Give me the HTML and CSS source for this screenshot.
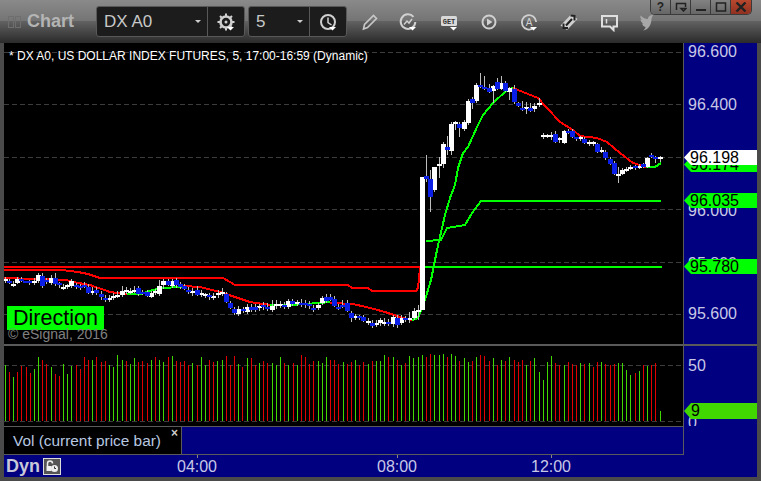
FILE: index.html
```html
<!DOCTYPE html>
<html lang="en">
<head>
<meta charset="utf-8">
<title>Chart</title>
<link rel="stylesheet" href="styles.css">
</head>
<body>
<div class="window">
  <header class="titlebar">
    <div class="links"><span class="link"></span><span class="link"></span></div>
    <div class="title">Chart</div>
    <div class="combo combo-symbol">
      <div class="combo-value">DX A0<span class="caret"></span></div>
      <button class="combo-btn">
        <svg class="ico" viewBox="0 0 20 20"><circle cx="10" cy="10" r="5.500" fill="none" stroke="#d0d0d0" stroke-width="2.600"/><circle cx="10" cy="10" r="1.500" fill="#d0d0d0"/><path d="M10 1.500V4M10 16V18.500M1.500 10H4M16 10H18.500M4 4L5.800 5.800M14.200 14.200L16 16M16 4L14.200 5.800M4 16L5.800 14.200" stroke="#d0d0d0" stroke-width="2"/><path d="M11 15H18L14.500 18.500Z" fill="#fff"/></svg>
      </button>
    </div>
    <div class="combo combo-interval">
      <div class="combo-value">5<span class="caret"></span></div>
      <button class="combo-btn">
        <svg class="ico" viewBox="0 0 20 20"><circle cx="10" cy="10" r="7" fill="none" stroke="#d0d0d0" stroke-width="2"/><path d="M10 5.500V10.500L13.500 13" fill="none" stroke="#d0d0d0" stroke-width="1.500"/><path d="M11 15H18L14.500 18.500Z" fill="#fff"/></svg>
      </button>
    </div>
    <div class="tools">
      <svg class="ico t-pencil" viewBox="0 0 20 20"><path d="M3.500 17L4.500 12.500L13.500 3.500L16.500 6.500L7.500 15.500Z" fill="none" stroke="#c8c8c8" stroke-width="1.600"/></svg>
      <svg class="ico t-study" viewBox="0 0 20 20"><path d="M15.500 4.800A7.300 7.300 0 1 0 17.300 10" fill="none" stroke="#d0d0d0" stroke-width="2"/><path d="M6 12.500L9 9L11 11L14 7" fill="none" stroke="#d0d0d0" stroke-width="1.500"/><path d="M11 15H18L14.500 18.500Z" fill="#fff"/></svg>
      <svg class="ico t-get" viewBox="0 0 20 20"><rect x="0" y="4" width="16" height="10" rx="1.500" fill="#d8d8d8"/><text class="get-text" x="8" y="12">GET</text><path d="M9 15H16L12.500 18.500Z" fill="#fff"/></svg>
      <svg class="ico t-play" viewBox="0 0 20 20"><circle cx="10" cy="10" r="6.500" fill="none" stroke="#d0d0d0" stroke-width="2"/><path d="M8 6.500L13.500 10L8 13.500Z" fill="#d0d0d0"/></svg>
      <svg class="ico t-alert" viewBox="0 0 20 20"><path d="M14.500 16A7.200 7.200 0 1 1 17.200 10" fill="none" stroke="#d0d0d0" stroke-width="1.800"/><text class="alert-text" x="10" y="14">A</text><path d="M11 15H18L14.500 18.500Z" fill="#fff"/></svg>
      <svg class="ico t-swap" viewBox="0 0 20 20"><path d="M1.500 13.500L12 2.500L18.500 7L8 18Z" fill="#d0d0d0"/><path d="M11.500 3.500L15.500 4L15.500 8.500M4.500 11.500L4.500 16L9 16M7 13.500L13 7" fill="none" stroke="#222" stroke-width="2"/></svg>
      <svg class="ico t-note" viewBox="0 0 20 20"><path d="M3 4H18V14.500H14.500V18L11 14.500H3Z" fill="none" stroke="#e0e0e0" stroke-width="2"/><path d="M7.500 7V11.500" stroke="#e0e0e0" stroke-width="1.500"/></svg>
      <svg class="ico t-bird" viewBox="0 0 20 20"><path d="M17 3L15.500 6.500C15.500 12.500 12.500 18 7 18.500C9 17 9.500 16 9.500 15C7.500 14.500 6.500 13 6 11.500L7.500 11.500C5.500 10.500 4.500 9 4.500 7.500L6 8C4.500 6.500 4 5 4.500 3.500C7 6 9.500 7 12 7C11.800 4.500 14.500 3 17 3Z" fill="#a8a8a8"/></svg>
    </div>
    <div class="winbtns">
      <button class="winbtn">?</button>
      <button class="winbtn"><svg class="winico" viewBox="0 0 12 10"><path d="M1.500 8V1.500H10.500V5M6 6.500H11L8.500 9Z" fill="none" stroke="#222" stroke-width="1.500"/></svg></button>
      <button class="winbtn"><svg class="winico" viewBox="0 0 12 10"><path d="M1 8H11" stroke="#222" stroke-width="2"/></svg></button>
      <button class="winbtn"><svg class="winico" viewBox="0 0 12 10"><rect x="1.500" y="1" width="9" height="8" fill="none" stroke="#222" stroke-width="1.500"/></svg></button>
      <button class="winbtn winbtn-close"><svg class="winico" viewBox="0 0 12 10"><path d="M1.500 0.500L10.500 9.500M10.500 0.500L1.500 9.500" stroke="#222" stroke-width="2.400"/></svg></button>
    </div>
  </header>

  <section class="row row-price">
    <div class="canvas">
      <svg class="plot" width="679" height="301" viewBox="4 43 679 301">
        <path class="grid" d="M4 52.500H683M4 104.500H683M4 157.500H683M4 209.500H683M4 262.500H683M4 314.500H683"/>
        <polyline class="l-red" points="4,267 420,267"/>
        <polyline class="l-green" points="420,267 662,267"/>
        <polyline class="l-red" points="4,270 62,270 70,271 78,272 88,274 100,278 223,278 230,282 235,285 348,285 352,288 368,288 372,291 416,291 418,288 419,279 420,267"/>
        <polyline class="l-red" points="4,278 33,279 66,280 73,282 90,285 110,292 127,294"/>
        <polyline class="l-green" points="127,294 140,294 160,288 183,287"/>
        <polyline class="l-red" points="183,286 200,287 220,292 235,297 250,302 270,305"/>
        <polyline class="l-green" points="270,305 290,305 320,303 330,302"/>
        <polyline class="l-red" points="330,303 353,304 370,308 385,312 400,317 412,320"/>
        <polyline class="l-green" points="412,320 418,318 425,300 431,280 437,250 445,215 450,198 455,185 458,168 463,153 468,147 478,125 483,115 493,103 507,90 513,88"/>
        <polyline class="l-red" points="513,88 528,94 538,98 547,108 560,122 573,130 580,136 597,138 607,142 620,153 633,163 646,167"/>
        <polyline class="l-green" points="646,167 655,167 661,163"/>
        <polyline class="l-green" points="426,241 441,240 447,228 465,225 472,213 481,201 661,201"/>
        <path class="wick" d="M5.500 277V283M9.500 279V284M13.500 281V287M17.500 277V284M21.500 277V282M29.500 280V285M34.500 278V285M38.500 273V283M42.500 273V288M46.500 278V284M51.500 275V285M55.500 273V286M59.500 282V288M63.500 284V290M67.500 284V289M71.500 279V288M76.500 283V289M80.500 284V290M84.500 282V288M88.500 284V294M92.500 287V295M96.500 287V295M101.500 291V300M105.500 295V302M109.500 295V302M113.500 293V300M117.500 291V298M122.500 286V297M126.500 287V294M130.500 288V294M134.500 286V293M138.500 286V296M142.500 290V295M147.500 290V297M151.500 291V298M155.500 289V295M159.500 280V296M163.500 279V289M168.500 279V286M172.500 279V288M176.500 278V288M180.500 282V289M184.500 284V290M188.500 287V294M192.500 288V296M197.500 286V296M201.500 290V297M205.500 293V298M209.500 293V300M213.500 293V300M218.500 290V298M222.500 288V296M226.500 292V303M230.500 301V309M234.500 307V315M238.500 306V316M243.500 307V313M247.500 304V314M251.500 304V312M255.500 304V312M259.500 304V311M263.500 302V310M267.500 303V311M272.500 300V312M276.500 300V309M280.500 301V308M284.500 302V309M288.500 299V309M292.500 299V306M297.500 300V306M301.500 299V307M305.500 300V308M309.500 301V309M313.500 305V312M318.500 303V310M322.500 296V305M326.500 294V303M330.500 294V301M334.500 296V307M338.500 304V310M342.500 300V308M347.500 300V312M351.500 311V322M355.500 314V320M359.500 315V320M363.500 315V322M368.500 318V325M372.500 320V328M376.500 320V327M380.500 318V326M384.500 318V326M388.500 319V326M393.500 315V327M397.500 315V328M401.500 315V325M405.500 316V322M409.500 312V323M414.500 308V320M418.500 305V320M426.500 155V182M430.500 170V212M434.500 167V192M439.500 157V178M443.500 142V168M447.500 136V155M451.500 122V155M455.500 121V130M459.500 122V137M464.500 120V131M468.500 99V125M472.500 97V109M476.500 83V103M480.500 73V88M484.500 76V90M489.500 84V93M493.500 85V103M497.500 78V90M501.500 76V90M505.500 81V92M509.500 87V100M514.500 85V104M518.500 102V107M522.500 101V111M526.500 102V114M530.500 103V112M534.500 103V112M539.500 98V107M543.500 133V139M547.500 134V138M551.500 132V140M555.500 131V143M559.500 137V143M564.500 130V144M568.500 129V134M572.500 129V138M576.500 137V141M580.500 136V141M584.500 137V144M589.500 140V146M593.500 141V146M597.500 143V153M601.500 147V153M605.500 150V160M610.500 157V165M614.500 161V175M618.500 167V183M622.500 168V175M626.500 167V172M630.500 165V170M635.500 165V170M639.500 164V169M643.500 163V168M647.500 157V168M651.500 153V158M655.500 156V163M660.500 156V162"/>
        <path class="body-white" d="M5 279V281M13 284V286M17 279V283M34 281V283M38 275V281M51 278V283M63 287V289M67 285V287M71 281V286M92 291V293M109 298V300M113 296V298M117 295V297M122 291V295M126 290V292M130 291V293M134 290V292M151 293V297M155 291V293M159 286V294M163 281V285M172 281V286M192 291V293M201 293V295M205 294V296M213 296V298M218 293V295M222 292V294M238 309V314M247 307V312M259 306V308M272 306V310M276 304V306M280 304V306M288 301V307M297 302V304M318 305V308M322 298V303M355 316V318M368 321V323M376 323V325M380 320V323M384 322V324M393 317V324M401 318V323M409 318V320M414 311V318M418 310V312M434 167V190M439 164V166M443 144V164M451 124V151M455 122V124M464 122V129M468 101V123M476 85V101M493 86V91M501 83V89M509 88V92M526 107V109M534 106V109M539 103V105M543 135V137M547 135V137M551 135V137M559 138V140M564 131V143M580 137V139M589 142V144M593 142V144M601 150V152M618 174V176M622 170V174M626 169V171M630 167V169M639 166V168M647 158V167M660 157V159"/>
        <path class="body-spike" d="M422.500 177V310"/>
        <path class="body-blue" d="M9 281V283M21 279V281M25 281V283M29 281V283M42 276V286M46 280V282M55 278V284M59 283V285M76 285V287M80 286V288M84 285V287M88 287V293M96 290V293M101 294V297M105 298V300M138 288V294M142 292V294M147 292V296M168 281V285M176 280V285M180 284V287M184 286V289M188 290V292M197 290V295M209 295V297M226 294V302M230 303V308M234 309V313M243 309V311M251 307V310M255 307V310M263 305V307M267 307V309M284 305V307M292 301V304M301 303V305M305 303V305M309 304V306M313 308V310M326 297V301M330 297V300M334 299V306M338 307V309M342 305V307M347 303V311M351 313V318M359 316V318M363 317V321M372 323V326M388 322V324M397 318V325M405 318V320M426 176V179M430 179V197M447 147V150M459 124V128M472 99V103M480 85V87M484 87V89M489 88V92M497 82V89M505 83V91M514 89V102M518 103V106M522 108V110M530 108V111M555 134V142M568 131V133M572 131V137M576 137V139M584 139V143M597 144V152M605 152V158M610 159V164M614 163V174M635 166V168M643 164V167M651 155V157M655 157V159"/>
      </svg>
      <div class="study-title">* DX A0, US DOLLAR INDEX FUTURES, 5, 17:00-16:59 (Dynamic)</div>
      <div class="study-tag">Direction</div>
      <div class="copyright">© eSignal, 2016</div>
    </div>
    <div class="axis">
      <span class="tick p1">96.600</span>
      <span class="tick p2">96.400</span>
      <span class="tick p3">96.000</span>
      <span class="tick p4">95.800</span>
      <span class="tick p5">95.600</span>
      <span class="flag flag-green f1">96.174</span>
      <span class="flag flag-white f2">96.198</span>
      <span class="flag flag-green f3">96.035</span>
      <span class="flag flag-green f4">95.780</span>
    </div>
  </section>

  <div class="divider"></div>

  <section class="row row-vol">
    <div class="canvas">
      <svg class="plot" width="679" height="80" viewBox="4 346 679 80">
        <path class="grid" d="M4 365.500H683M4 421.500H683"/>
        <path class="v-green" d="M5.500 365V421M13.500 377V421M34.500 369V421M38.500 357V421M51.500 367V421M63.500 364V421M67.500 374V421M71.500 366V421M92.500 360V421M109.500 365V421M113.500 367V421M117.500 355V421M122.500 360V421M130.500 364V421M134.500 358V421M151.500 360V421M159.500 360V421M163.500 362V421M172.500 356V421M192.500 363V421M201.500 357V421M205.500 365V421M217.500 361V421M222.500 360V421M238.500 364V421M247.500 358V421M259.500 363V421M272.500 363V421M276.500 365V421M280.500 357V421M288.500 365V421M297.500 365V421M318.500 361V421M322.500 363V421M326.500 357V421M343.500 362V421M355.500 360V421M368.500 364V421M376.500 361V421M380.500 361V421M384.500 355V421M393.500 357V421M401.500 365V421M409.500 356V421M413.500 358V421M418.500 357V421M422.500 355V421M434.500 355V421M439.500 355V421M443.500 354V421M451.500 354V421M455.500 356V421M464.500 358V421M468.500 362V421M476.500 357V421M493.500 358V421M501.500 360V421M509.500 357V421M526.500 365V421M534.500 358V421M539.500 372V421M543.500 380V421M547.500 362V421M551.500 356V421M564.500 365V421M580.500 363V421M589.500 363V421M601.500 362V421M618.500 363V421M622.500 363V421M626.500 370V421M630.500 375V421M639.500 371V421M647.500 366V421M660.500 411V421"/>
        <path class="v-red" d="M9.500 372V421M17.500 372V421M21.500 366V421M26.500 367V421M30.500 373V421M42.500 360V421M46.500 364V421M55.500 374V421M59.500 376V421M76.500 365V421M80.500 369V421M84.500 357V421M88.500 360V421M96.500 357V421M101.500 362V421M105.500 361V421M126.500 361V421M138.500 362V421M142.500 361V421M147.500 363V421M155.500 357V421M168.500 357V421M176.500 361V421M180.500 362V421M184.500 361V421M188.500 365V421M197.500 365V421M209.500 360V421M213.500 362V421M226.500 356V421M230.500 365V421M234.500 356V421M242.500 367V421M251.500 358V421M255.500 365V421M263.500 361V421M267.500 363V421M284.500 363V421M293.500 363V421M301.500 355V421M305.500 357V421M309.500 364V421M313.500 361V421M330.500 360V421M334.500 360V421M338.500 364V421M347.500 364V421M351.500 362V421M359.500 365V421M363.500 362V421M372.500 361V421M388.500 357V421M397.500 360V421M405.500 363V421M426.500 357V421M430.500 354V421M447.500 357V421M459.500 361V421M472.500 361V421M480.500 355V421M484.500 356V421M489.500 361V421M497.500 365V421M505.500 361V421M514.500 360V421M518.500 362V421M522.500 360V421M530.500 361V421M555.500 363V421M559.500 365V421M568.500 362V421M572.500 364V421M576.500 365V421M584.500 364V421M593.500 367V421M597.500 362V421M605.500 364V421M610.500 365V421M614.500 364V421M635.500 373V421M643.500 365V421M651.500 365V421M655.500 363V421"/>
      </svg>
    </div>
    <div class="axis">
      <span class="tick v1">50</span>
      <span class="tick v2">0</span>
      <span class="flag flag-vol f5">9</span>
    </div>
  </section>

  <section class="row row-legend">
    <div class="legend">
      <div class="legend-name">Vol (current price bar)<span class="legend-close">×</span></div>
      <div class="legend-fill"></div>
    </div>
    <div class="axis axis-empty"></div>
  </section>

  <footer class="timebar">
    <div class="mode">Dyn</div>
    <svg class="lock" viewBox="0 0 18 17"><rect x="0.500" y="0.500" width="17" height="16" fill="#555" stroke="#ddd"/><path d="M4.500 8V5.500A2.500 2.500 0 0 1 9.500 5.500" fill="none" stroke="#eee" stroke-width="1.500"/><rect x="3.500" y="8" width="5" height="5" fill="#eee"/><circle cx="11.500" cy="10.500" r="3.500" fill="#eee"/><path d="M11.500 8.500V10.500H13" fill="none" stroke="#333"/></svg>
    <span class="time t1">04:00</span>
    <span class="time t2">08:00</span>
    <span class="time t3">12:00</span>
  </footer>
</div>
</body>
</html>
```

FILE: styles.css
```css
* { box-sizing: border-box; }
html, body { margin: 0; padding: 0; background: #4a4a4a; }
body { font-family: "Liberation Sans", Arial, sans-serif; overflow: hidden; }

.window {
  width: 761px;
  height: 481px;
  padding: 0 4px 4px;
  display: flex;
  flex-direction: column;
  background: #4a4a4a;
}

/* title bar */
.titlebar {
  position: relative;
  height: 43px;
  margin: 0 -4px;
  flex: none;
  display: flex;
  align-items: center;
  background: linear-gradient(#8a8a8a 0, #747474 21px, #626262 21px, #2a2a2a 43px);
}
.links { display: flex; gap: 1px; margin-left: 8px; width: 19px; }
.link { width: 6px; height: 12px; border: 1px solid #6e6e6e; }
.title { margin-left: 0; width: 69px; font-weight: 700; font-size: 18px; color: #b4b4b4; }
.combo {
  display: flex;
  height: 31px;
  background: #1c1c1c;
  border: 1px solid #585858;
  border-radius: 3px;
}
.combo-symbol { width: 149px; }
.combo-interval { width: 99px; margin-left: 3px; }
.combo-value {
  position: relative;
  flex: 1;
  padding-left: 7px;
  font-size: 17px;
  line-height: 29px;
  color: #c8c8c8;
}
.caret {
  position: absolute;
  right: 6px;
  top: 13px;
  border: 3px solid transparent;
  border-top: 3px solid #ccc;
}
.combo-btn {
  width: 37px;
  padding: 0;
  display: flex;
  align-items: center;
  justify-content: center;
  background: none;
  border: 0;
  border-left: 1px solid #585858;
}
.ico { width: 20px; height: 20px; flex: none; }
.tools { display: flex; align-items: center; margin-left: 13px; }
.t-study { margin-left: 18px; }
.t-get { margin-left: 23px; }
.t-play { margin-left: 18px; }
.t-alert, .t-swap, .t-note { margin-left: 20px; }
.t-bird { margin-left: 17px; }
.get-text { font-family: "Liberation Mono", monospace; font-weight: 700; font-size: 7px; text-anchor: middle; fill: #333; }
.alert-text { font-family: "Liberation Sans", sans-serif; font-size: 10px; text-anchor: middle; fill: #d0d0d0; }

.winbtns {
  position: absolute;
  top: 0;
  right: 9px;
  display: flex;
  height: 15px;
  border: 1px solid #3a3a3a;
  border-top: 0;
  border-radius: 0 0 5px 5px;
  overflow: hidden;
}
.winbtn {
  width: 20px;
  padding: 0;
  display: flex;
  align-items: center;
  justify-content: center;
  font: 700 12px/14px "Liberation Sans", sans-serif;
  color: #222;
  background: linear-gradient(#828282, #666);
  border: 0;
  border-right: 1px solid #3a3a3a;
}
.winbtn-close { border-right: 0; background: linear-gradient(#b8482e, #903020); }
.winico { width: 12px; height: 10px; }

/* panes */
.row { display: flex; flex: none; }
.row-price { height: 301px; }
.row-vol { height: 80px; }
.row-legend { height: 29px; }
.canvas {
  position: relative;
  width: 680px;
  background: #000;
  border-right: 1px solid #5a5a5a;
  overflow: hidden;
}
.plot { display: block; }
.axis { position: relative; flex: 1; background: #000080; }
.divider { height: 2px; flex: none; background: #5a5a5a; }

.grid { fill: none; stroke: #3c3c3c; stroke-dasharray: 5 3; }
.l-red, .l-green { fill: none; stroke-width: 2; shape-rendering: crispEdges; }
.l-red { stroke: #f00; }
.l-green { stroke: #0f0; }
.wick { fill: none; stroke: #bdbdbd; }
.body-white { fill: none; stroke: #fff; stroke-width: 5; shape-rendering: crispEdges; }
.body-blue { fill: none; stroke: #0a1ee6; stroke-width: 5; shape-rendering: crispEdges; }
.body-spike { fill: none; stroke: #fff; stroke-width: 5; }
.v-green { fill: none; stroke: #40d800; }
.v-red { fill: none; stroke: #e00000; }

.study-title {
  position: absolute;
  left: 5px;
  top: 6px;
  font-size: 12px;
  line-height: 14px;
  color: #fff;
  white-space: nowrap;
}
.study-tag {
  position: absolute;
  left: 3px;
  top: 263px;
  width: 97px;
  height: 24px;
  padding-left: 6px;
  font-size: 21.500px;
  line-height: 24px;
  color: #000;
  background: #00ff00;
}
.copyright {
  position: absolute;
  left: 4px;
  top: 283px;
  font-size: 14px;
  line-height: 16px;
  color: #808080;
  white-space: nowrap;
}

/* axis labels sit at their data values */
.tick {
  position: absolute;
  left: 4px;
  font-size: 16px;
  line-height: 18px;
  color: #c8c8e6;
}
.p1 { top: 0; }
.p2 { top: 53px; }
.p3 { top: 159px; }
.p4 { top: 212px; }
.p5 { top: 262px; }
.v1 { top: 11px; }
.v2 { top: 68px; }

.flag {
  position: absolute;
  left: 0;
  right: 0;
  height: 15px;
  padding-left: 6px;
  font-size: 16px;
  line-height: 15px;
  color: #000;
  clip-path: polygon(0 50%, 7px 0, 100% 0, 100% 100%, 7px 100%);
}
.flag-green { background: #00ff00; }
.flag-white { background: #fff; }
.flag-vol { background: #40d800; height: 16px; line-height: 16px; padding-left: 7px; }
.f1 { top: 114px; }
.f2 { top: 107px; }
.f3 { top: 150px; }
.f4 { top: 216px; }
.f5 { top: 57px; }

/* legend strip */
.legend {
  width: 680px;
  display: flex;
  border-top: 1px solid #5a5a5a;
  border-bottom: 1px solid #5a5a5a;
  border-right: 1px solid #5a5a5a;
}
.legend-name {
  position: relative;
  width: 178px;
  padding: 5px 0 0 9px;
  font-size: 15.400px;
  line-height: 18px;
  color: #b8c8e0;
  background: #000;
  border-right: 1px solid #5a5a5a;
  white-space: nowrap;
}
.legend-close {
  position: absolute;
  right: 3px;
  top: 0;
  font-size: 12px;
  line-height: 12px;
  font-weight: 700;
  color: #ccc;
}
.legend-fill { flex: 1; background: #000080; }

/* time axis */
.timebar {
  position: relative;
  flex: 1;
  display: flex;
  align-items: center;
  padding-left: 2px;
  background: #000080;
}
.mode { font-size: 18px; font-weight: 700; color: #c8c8d8; line-height: 20px; }
.lock { width: 18px; height: 17px; margin-left: 3px; }
.time {
  position: absolute;
  top: 3px;
  font-size: 16px;
  line-height: 18px;
  color: #c8c8e6;
  transform: translateX(-50%);
}
.time::before {
  content: "";
  position: absolute;
  left: 50%;
  top: -3px;
  width: 1px;
  height: 3px;
  background: #888;
}
.t1 { left: 193px; }
.t2 { left: 393px; }
.t3 { left: 547px; }
```
